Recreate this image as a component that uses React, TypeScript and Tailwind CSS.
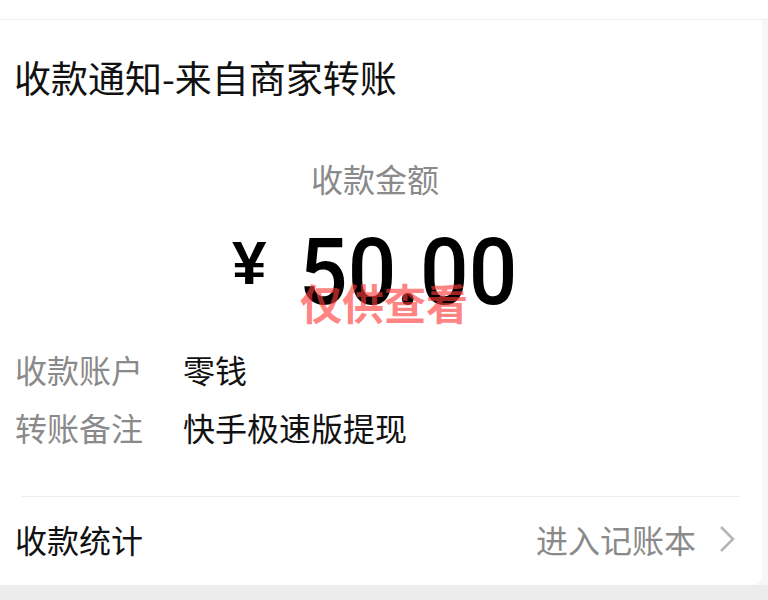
import React from "react";

export default function App() {
  const cjk = { fontFamily: '"Noto Sans CJK SC", "Noto Sans", sans-serif' } as React.CSSProperties;
  return (
    <div className="w-[768px] h-[600px] flex flex-col bg-[#f7f7f7] overflow-hidden" style={cjk}>
      <div className="h-[20px] bg-white border-b border-[#ececec] shrink-0" />
      <div className="flex flex-1">
        <div className="relative w-[762px] h-[565px] bg-white rounded-br-[10px] flex flex-col">
          <div className="pl-[14px] pt-[39px] text-[37px] leading-none text-[#111]">收款通知-来自商家转账</div>
          <div className="mt-[66px] pr-[12px] text-center text-[32px] leading-none text-[#8a8a8a]">收款金额</div>
          <div className="mt-[33px] flex items-center pl-[232px] text-black">
            <span className="text-[62px] font-bold leading-none -mt-[20px]" style={{ fontFamily: '"Liberation Sans", Arial, sans-serif' }}>¥</span>
            <span className="ml-[33px] text-[92px] font-medium leading-none origin-left scale-x-[0.93]" style={{ fontFamily: 'Roboto, "Liberation Sans", sans-serif' }}>50.00</span>
          </div>
          <div className="mt-[34px] pl-[15px] flex flex-col gap-[26px] text-[32px] leading-none">
            <div className="flex">
              <span className="w-[168px] text-[#8a8a8a]">收款账户</span>
              <span className="text-[#111]">零钱</span>
            </div>
            <div className="flex">
              <span className="w-[168px] text-[#8a8a8a]">转账备注</span>
              <span className="text-[#111]">快手极速版提现</span>
            </div>
          </div>
          <div className="mt-[53px] mx-[22px] h-px bg-[#ededed]" />
          <div className="mt-[26px] pl-[15px] pr-[26px] flex items-center justify-between text-[32px] leading-none">
            <span className="text-[#111]">收款统计</span>
            <div className="flex items-center">
              <span className="text-[#8a8a8a]">进入记账本</span>
              <svg className="ml-[22px]" width="18" height="28" viewBox="0 0 18 28">
                <path d="M3 2 L15 14 L3 26" fill="none" stroke="#b5b5b5" strokeWidth="2.5" />
              </svg>
            </div>
          </div>
          <div className="absolute left-[300px] top-[261px] text-[42px] font-bold leading-none text-[rgba(255,60,60,0.65)]">仅供查看</div>
        </div>
        <div className="flex-1" />
      </div>
      <div className="h-[15px] bg-[#ececec] shrink-0" />
    </div>
  );
}
